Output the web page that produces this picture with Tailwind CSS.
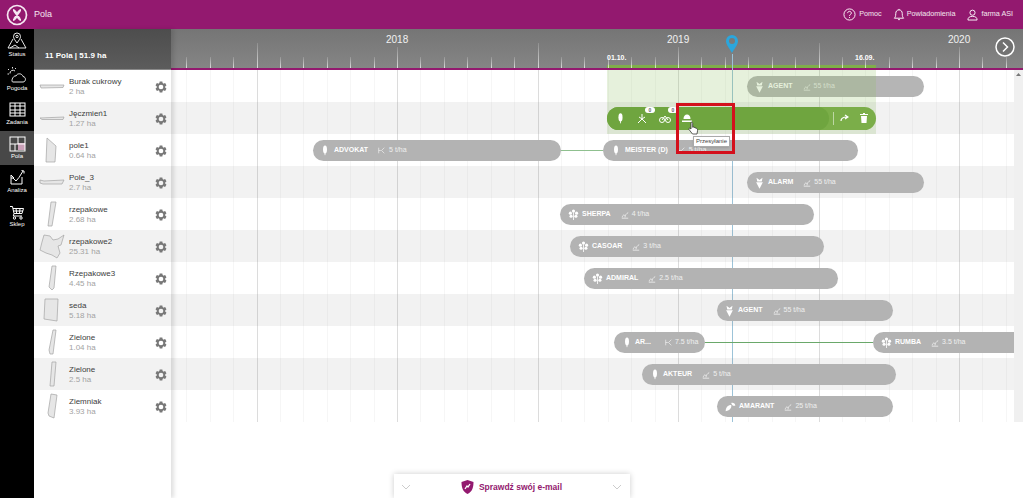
<!DOCTYPE html>
<html lang="pl">
  <head>
    <meta charset="UTF-8" />
    <title>Pola</title>
    <script src="https://cdn.jsdelivr.net/npm/@tailwindcss/browser@4"></script>
  </head>

  <body class="bg-white font-['Liberation_Sans',Arial,sans-serif] overflow-hidden">
    <!-- shared icons -->
    <svg class="hidden">
      <symbol id="gear" viewBox="0 0 24 24"><path fill-rule="evenodd" d="M19.14 12.94c.04-.3.06-.61.06-.94 0-.32-.02-.64-.07-.94l2.03-1.58c.18-.14.23-.41.12-.61l-1.92-3.32c-.12-.22-.37-.29-.59-.22l-2.39.96c-.5-.38-1.03-.7-1.62-.94l-.36-2.54c-.04-.24-.24-.41-.48-.41h-3.84c-.24 0-.43.17-.47.41l-.36 2.54c-.59.24-1.13.57-1.62.94l-2.39-.96c-.22-.08-.47 0-.59.22L2.74 8.87c-.12.21-.08.47.12.61l2.03 1.58c-.05.3-.09.63-.09.94s.02.64.07.94l-2.03 1.58c-.18.14-.23.41-.12.61l1.92 3.32c.12.22.37.29.59.22l2.39-.96c.5.38 1.03.7 1.62.94l.36 2.54c.05.24.24.41.48.41h3.84c.24 0 .44-.17.47-.41l.36-2.54c.59-.24 1.13-.56 1.62-.94l2.39.96c.22.08.47 0 .59-.22l1.92-3.32c.12-.22.07-.47-.12-.61l-2.01-1.58zM12 16a4 4 0 1 1 0-8 4 4 0 0 1 0 8z"/></symbol>
      <symbol id="grain" viewBox="0 0 12 16"><ellipse cx="6" cy="6.500" rx="3" ry="6" fill="currentColor"/><path d="M6 2v13" stroke="currentColor" stroke-width="1.200"/></symbol>
      <symbol id="beet" viewBox="0 0 14 16"><path fill="currentColor" d="M3 1l4 3 4-3-1 5H4zM2.500 7h9L7 15.500z"/></symbol>
      <symbol id="flower" viewBox="0 0 16 16"><g fill="currentColor"><circle cx="8" cy="3" r="2.300"/><circle cx="3.500" cy="6" r="2.300"/><circle cx="12.500" cy="6" r="2.300"/><circle cx="4.500" cy="10.500" r="2.300"/><circle cx="11.500" cy="10.500" r="2.300"/></g><path d="M8 5v11" stroke="currentColor" stroke-width="1.200"/></symbol>
      <symbol id="pea" viewBox="0 0 16 14"><path fill="currentColor" d="M1 13c0-5 3-9 8-9 1 3-1 8-8 9zM9 1c3-1 6 1 6 4-2 1-5 0-6-4z"/></symbol>
      <symbol id="yield" viewBox="0 0 10 10"><path fill="none" stroke="currentColor" stroke-width="1" d="M1 9h8M1.500 8C2 5 4 4 5 6M5 8c0-3 2-5 4-6"/></symbol>
      <symbol id="seed" viewBox="0 0 10 10"><path fill="none" stroke="currentColor" stroke-width="1" d="M1 1v8M1 5h3M9 1L5 5l4 4"/></symbol>
    </svg>

    <div class="relative w-[1023px] h-[498px] overflow-hidden">
      <!-- ========== Header ========== -->
      <header class="h-[29px] bg-[#93196f] flex items-center text-white/90 text-[7.2px]">
        <svg class="w-[22px] h-[22px] ml-[6px]" viewBox="0 0 22 22">
          <circle cx="11" cy="11" r="9.500" fill="none" stroke="#f5e6f1" stroke-width="1.700" />
          <path d="M7 6c2 0 2.500 3 4 3s2-3 4-3M7 16c2 0 2.500-3 4-3s2 3 4 3M8 7l6 8M14 7l-6 8" fill="none" stroke="#f5e6f1" stroke-width="2" />
        </svg>
        <span class="ml-[6px] text-[9px]">Pola</span>
        <div class="ml-auto flex items-center">
          <svg class="w-[13px] h-[13px]" viewBox="0 0 14 14" fill="none" stroke="white" stroke-width="1">
            <circle cx="7" cy="7" r="6" />
            <path d="M5 5.500C5 3 9 3 9 5.500 9 7 7 7 7 8.500M7 9.800v1" />
          </svg>
          <span class="ml-[3px]">Pomoc</span>
          <svg class="w-[12px] h-[13px] ml-[11px]" viewBox="0 0 12 14" fill="none" stroke="white" stroke-width="1">
            <path d="M1 11h10c-1-1-1.500-2-1.500-5C9.500 3.500 8 2 6 2S2.500 3.500 2.500 6c0 3-.5 4-1.500 5zM5 12.500h2M6 1v1" />
          </svg>
          <span class="ml-[2px]">Powiadomienia</span>
          <svg class="w-[11px] h-[12px] ml-[12px]" viewBox="0 0 12 13" fill="none" stroke="white" stroke-width="1">
            <circle cx="6" cy="4" r="2.800" />
            <path d="M1 12h10c0-3-2-4-5-4s-5 1-5 4z" />
          </svg>
          <span class="ml-[3px] mr-[10px]">farma ASI</span>
        </div>
      </header>

      <div class="flex h-[469px]">
        <!-- ========== Main nav ========== -->
        <nav class="w-[34px] bg-black text-white text-[6px] leading-[7px] flex flex-col shrink-0">
          <a class="h-[34px] flex flex-col items-center justify-end pb-[5px] gap-[1px]">
            <svg class="w-[20px] h-[18px]" viewBox="0 0 20 18" fill="none" stroke="white" stroke-width=".9">
              <path d="M10 11C8 8 6.500 6.500 6.500 4.500a3.500 3.500 0 0 1 7 0C13.500 6.500 12 8 10 11zM6 7l-5 9h18l-5-9M3 16l5-3 4 3" />
              <circle cx="10" cy="4.500" r="1.200" />
            </svg>
            <span>Status</span>
          </a>
          <a class="h-[34px] flex flex-col items-center justify-end pb-[5px] gap-[1px]">
            <svg class="w-[20px] h-[18px]" viewBox="0 0 20 18" fill="none" stroke="white" stroke-width=".9">
              <path d="M6 16h10c3 0 3.500-5 0-5.500C15 7 10 7 9 10c-3-1-5.500 6-3 6z" />
              <path d="M3 7.500a3 3 0 0 1 5-2.500M5.500 1v1.500M1 3l1 1M.5 8H2M9 2L8 3" />
            </svg>
            <span>Pogoda</span>
          </a>
          <a class="h-[34px] flex flex-col items-center justify-end pb-[5px] gap-[1px]">
            <svg class="w-[17px] h-[17px]" viewBox="0 0 17 17" fill="none" stroke="white" stroke-width="1">
              <rect x="1" y="2" width="15" height="13" />
              <path d="M1 5h15M1 9h15M1 12h15M6 2v13M11 2v13" />
            </svg>
            <span>Zadania</span>
          </a>
          <a class="h-[34px] flex flex-col items-center justify-end pb-[5px] gap-[1px] bg-[#484848]">
            <svg class="w-[17px] h-[17px]" viewBox="0 0 17 17" fill="none" stroke="white" stroke-width="1">
              <rect x="9" y="8" width="7" height="7" fill="#c9a0b8" stroke="none" />
              <rect x="1" y="2" width="15" height="14" />
              <path d="M9 2v7H1M9 9h7M6 9v7" />
            </svg>
            <span>Pola</span>
          </a>
          <a class="h-[34px] flex flex-col items-center justify-end pb-[5px] gap-[1px]">
            <svg class="w-[17px] h-[17px]" viewBox="0 0 17 17" fill="none" stroke="white" stroke-width="1">
              <path d="M2 6v9h11V8M2 9h2l3 3 3-3.500 4-6.500M2 6l3 3M12.500 1.500l2.500.5 0 2.500" />
            </svg>
            <span>Analiza</span>
          </a>
          <a class="h-[34px] flex flex-col items-center justify-end pb-[5px] gap-[1px]">
            <svg class="w-[16px] h-[15px]" viewBox="0 0 16 15" fill="none" stroke="white" stroke-width="1">
              <path d="M1 1.500h2.500l1.500 7h8l1.500-5H4M5 8.500L4.300 11H13M7 3.500l.7 5M11 3.500l-.5 5M4.500 6h9.500" />
              <circle cx="5.500" cy="13" r="1.200" />
              <circle cx="12" cy="13" r="1.200" />
            </svg>
            <span>Sklep</span>
          </a>
        </nav>

        <!-- ========== Field list ========== -->
        <aside class="w-[137px] shrink-0 relative z-20 bg-white shadow-[3px_0_4px_rgba(0,0,0,0.12)]">
          <div class="h-[41px] bg-gradient-to-b from-[#4d4d4d] to-[#5c5c5c] border-b border-[#8a8a8a] flex items-end pl-[11px] pb-[7px] text-[8px] font-bold text-white">
            11 Pola | 51.9 ha
          </div>

          <div class="h-[32px] flex items-center text-[8px]">
            <svg class="w-[26px] h-[26px] ml-[5px] shrink-0" viewBox="0 0 26 26"><path d="M1 12h24l-1 2.500L2 15z" fill="#e6e6e6" stroke="#a3a3a3" stroke-width=".7" /></svg>
            <div class="ml-[4px] pt-[2px] leading-[10px]"><p class="text-[#3d3d3d]">Burak cukrowy</p><p class="text-[#a3a3a3]">2 ha</p></div>
            <svg class="w-[14px] h-[14px] mt-[2px] ml-auto mr-[3px] fill-[#787878]"><use href="#gear" /></svg>
          </div>
          <div class="h-[32px] flex items-center text-[8px] bg-[#f2f2f2]">
            <svg class="w-[26px] h-[26px] ml-[5px] shrink-0" viewBox="0 0 26 26"><path d="M1 13l24-1-1 2.500H3z" fill="#e6e6e6" stroke="#a3a3a3" stroke-width=".7" /></svg>
            <div class="ml-[4px] pt-[2px] leading-[10px]"><p class="text-[#3d3d3d]">Jęczmień1</p><p class="text-[#a3a3a3]">1.27 ha</p></div>
            <svg class="w-[14px] h-[14px] mt-[2px] ml-auto mr-[3px] fill-[#787878]"><use href="#gear" /></svg>
          </div>
          <div class="h-[32px] flex items-center text-[8px]">
            <svg class="w-[26px] h-[26px] ml-[5px] shrink-0" viewBox="0 0 26 26"><path d="M8 1l9 8-1 16H7z" fill="#e6e6e6" stroke="#a3a3a3" stroke-width=".7" /></svg>
            <div class="ml-[4px] pt-[2px] leading-[10px]"><p class="text-[#3d3d3d]">pole1</p><p class="text-[#a3a3a3]">0.64 ha</p></div>
            <svg class="w-[14px] h-[14px] mt-[2px] ml-auto mr-[3px] fill-[#787878]"><use href="#gear" /></svg>
          </div>
          <div class="h-[32px] flex items-center text-[8px] bg-[#f2f2f2]">
            <svg class="w-[26px] h-[26px] ml-[5px] shrink-0" viewBox="0 0 26 26"><path d="M1 11l4 1 20-1-2 4H4l-3-1z" fill="#e6e6e6" stroke="#a3a3a3" stroke-width=".7" /></svg>
            <div class="ml-[4px] pt-[2px] leading-[10px]"><p class="text-[#3d3d3d]">Pole_3</p><p class="text-[#a3a3a3]">2.7 ha</p></div>
            <svg class="w-[14px] h-[14px] mt-[2px] ml-auto mr-[3px] fill-[#787878]"><use href="#gear" /></svg>
          </div>
          <div class="h-[32px] flex items-center text-[8px]">
            <svg class="w-[26px] h-[26px] ml-[5px] shrink-0" viewBox="0 0 26 26"><path d="M12 1h5l-4 24H9z" fill="#e6e6e6" stroke="#a3a3a3" stroke-width=".7" /></svg>
            <div class="ml-[4px] pt-[2px] leading-[10px]"><p class="text-[#3d3d3d]">rzepakowe</p><p class="text-[#a3a3a3]">2.68 ha</p></div>
            <svg class="w-[14px] h-[14px] mt-[2px] ml-auto mr-[3px] fill-[#787878]"><use href="#gear" /></svg>
          </div>
          <div class="h-[32px] flex items-center text-[8px] bg-[#f2f2f2]">
            <svg class="w-[26px] h-[26px] ml-[5px] shrink-0" viewBox="0 0 26 26"><path d="M5 2l6 1 3 4 5-1 6-4-3 10-3 1 2 7-3 5-5-3-6-2-6-3 2-8z" fill="#e6e6e6" stroke="#a3a3a3" stroke-width=".7" /></svg>
            <div class="ml-[4px] pt-[2px] leading-[10px]"><p class="text-[#3d3d3d]">rzepakowe2</p><p class="text-[#a3a3a3]">25.31 ha</p></div>
            <svg class="w-[14px] h-[14px] mt-[2px] ml-auto mr-[3px] fill-[#787878]"><use href="#gear" /></svg>
          </div>
          <div class="h-[32px] flex items-center text-[8px]">
            <svg class="w-[26px] h-[26px] ml-[5px] shrink-0" viewBox="0 0 26 26"><path d="M13 1h4l-2 22-2 2-3-3z" fill="#e6e6e6" stroke="#a3a3a3" stroke-width=".7" /></svg>
            <div class="ml-[4px] pt-[2px] leading-[10px]"><p class="text-[#3d3d3d]">Rzepakowe3</p><p class="text-[#a3a3a3]">4.45 ha</p></div>
            <svg class="w-[14px] h-[14px] mt-[2px] ml-auto mr-[3px] fill-[#787878]"><use href="#gear" /></svg>
          </div>
          <div class="h-[32px] flex items-center text-[8px] bg-[#f2f2f2]">
            <svg class="w-[26px] h-[26px] ml-[5px] shrink-0" viewBox="0 0 26 26"><path d="M6 2h13l-1 22-13-2z" fill="#e6e6e6" stroke="#a3a3a3" stroke-width=".7" /></svg>
            <div class="ml-[4px] pt-[2px] leading-[10px]"><p class="text-[#3d3d3d]">seda</p><p class="text-[#a3a3a3]">5.18 ha</p></div>
            <svg class="w-[14px] h-[14px] mt-[2px] ml-auto mr-[3px] fill-[#787878]"><use href="#gear" /></svg>
          </div>
          <div class="h-[32px] flex items-center text-[8px]">
            <svg class="w-[26px] h-[26px] ml-[5px] shrink-0" viewBox="0 0 26 26"><path d="M14 1h3l-3 24h-3l-1-4z" fill="#e6e6e6" stroke="#a3a3a3" stroke-width=".7" /></svg>
            <div class="ml-[4px] pt-[2px] leading-[10px]"><p class="text-[#3d3d3d]">Zielone</p><p class="text-[#a3a3a3]">1.04 ha</p></div>
            <svg class="w-[14px] h-[14px] mt-[2px] ml-auto mr-[3px] fill-[#787878]"><use href="#gear" /></svg>
          </div>
          <div class="h-[32px] flex items-center text-[8px] bg-[#f2f2f2]">
            <svg class="w-[26px] h-[26px] ml-[5px] shrink-0" viewBox="0 0 26 26"><path d="M13 1h4l-2 24h-4z" fill="#e6e6e6" stroke="#a3a3a3" stroke-width=".7" /></svg>
            <div class="ml-[4px] pt-[2px] leading-[10px]"><p class="text-[#3d3d3d]">Zielone</p><p class="text-[#a3a3a3]">2.5 ha</p></div>
            <svg class="w-[14px] h-[14px] mt-[2px] ml-auto mr-[3px] fill-[#787878]"><use href="#gear" /></svg>
          </div>
          <div class="h-[32px] flex items-center text-[8px]">
            <svg class="w-[26px] h-[26px] ml-[5px] shrink-0" viewBox="0 0 26 26"><path d="M12 1l6 1-3 23-5-2-1-3z" fill="#e6e6e6" stroke="#a3a3a3" stroke-width=".7" /></svg>
            <div class="ml-[4px] pt-[2px] leading-[10px]"><p class="text-[#3d3d3d]">Ziemniak</p><p class="text-[#a3a3a3]">3.93 ha</p></div>
            <svg class="w-[14px] h-[14px] mt-[2px] ml-auto mr-[3px] fill-[#787878]"><use href="#gear" /></svg>
          </div>
        </aside>

        <!-- ========== Timeline ========== -->
        <main class="relative flex-1 min-w-0">
          <div id="axis" class="relative h-[41px] bg-gradient-to-b from-[#757575] to-[#858585] border-b-2 border-[#93196f]">
            <span class="absolute left-[215px] top-[3px] text-[10px] text-white/90">2018</span>
            <span class="absolute left-[496px] top-[3px] text-[10px] text-white/90">2019</span>
            <span class="absolute left-[777px] top-[3px] text-[10px] text-white/90">2020</span>
            <span class="absolute left-[436px] top-[24px] text-[7px] font-bold text-white">01.10.</span>
            <span class="absolute left-[684px] top-[24px] text-[7px] font-bold text-white">16.09.</span>
            <div class="absolute left-[436px] w-[269px] bottom-0 h-[3px] bg-[#7fae4a]"></div>
            <svg class="absolute left-[555px] top-[6px] w-[12px] h-[18px] z-10" viewBox="0 0 12 18">
              <path fill-rule="evenodd" fill="#2ba6dc" d="M6 18C4 14 0 10 0 6a6 6 0 0 1 12 0c0 4-4 8-6 12zM6 9a3 3 0 1 0 0-6 3 3 0 0 0 0 6z" />
            </svg>
            <svg class="absolute left-[824px] top-[8px] w-[20px] h-[20px] z-10" viewBox="0 0 20 20" fill="none" stroke="white" stroke-width="1.500">
              <circle cx="10" cy="10" r="9" fill="#6b6b6b" fill-opacity=".6" />
              <path d="M8 5.500l4.500 4.500L8 14.500" />
            </svg>
          </div>

          <div class="relative w-[843px]">
            <!-- grid lines drawn by script below -->
            <div id="grid" class="absolute inset-0"></div>
            <div class="absolute left-[561px] -top-[16px] bottom-0 w-px bg-[#9cc3d8]"></div>

            <div class="relative h-[32px]">
              <div class="absolute left-[576px] w-[177px] top-[6px] h-[21px] rounded-full bg-[#b5b5b5] flex items-center text-[7px] text-white">
                <svg class="w-[11px] h-[12px] ml-[7px]"><use href="#beet" /></svg>
                <b class="ml-[3px]">AGENT</b>
                <svg class="w-[8px] h-[8px] ml-[10px] text-white/70"><use href="#yield" /></svg>
                <span class="ml-[3px] text-white/70">55 t/ha</span>
              </div>
            </div>

            <!-- selected season, lies over the first row's bar -->
            <div class="absolute left-[436px] w-[269px] top-0 h-[64px] bg-[#8fbf5f]/22"></div>

            <div class="relative h-[32px] bg-[#808080]/10">
              <div class="absolute left-[436px] w-[269px] top-[5px] h-[23px] rounded-full bg-[#7bae49] text-white">
                <div class="absolute left-0 top-0 bottom-0 w-[222px] rounded-full bg-[#6fa53f]"></div>
                <svg class="absolute left-[9px] top-[6px] w-[9px] h-[11px]"><use href="#grain" /></svg>
                <svg class="absolute left-[30px] top-[6px] w-[10px] h-[11px]" viewBox="0 0 10 11" fill="none" stroke="white" stroke-width="1"><path d="M5 1v5L1 10M5 6l4 4M2 4l3 2 3-2" /></svg>
                <span class="absolute left-[38px] top-[0px] w-[10px] h-[6px] rounded-[3px] bg-white text-[#666] text-[5px] leading-[6px] font-bold text-center">0</span>
                <svg class="absolute left-[52px] top-[7px] w-[12px] h-[9px]" viewBox="0 0 12 9" fill="none" stroke="white" stroke-width="1"><circle cx="3" cy="6" r="2.500" /><circle cx="9" cy="6" r="2.500" /><path d="M3 6l3-4 3 4" /></svg>
                <span class="absolute left-[61px] top-[0px] w-[10px] h-[6px] rounded-[3px] bg-white text-[#666] text-[5px] leading-[6px] font-bold text-center">0</span>
                <svg class="absolute left-[75px] top-[6px] w-[10px] h-[10px]" viewBox="0 0 10 10" fill="white"><path d="M1.500 6C1.500 3 3 1.500 5 1.500S8.500 3 8.500 6zM0 7.500h10V9H0z" /></svg>
                <div class="absolute left-[226px] top-[5px] h-[13px] w-px bg-white/50"></div>
                <svg class="absolute left-[233px] top-[7px] w-[9px] h-[8px]" viewBox="0 0 9 8" fill="none" stroke="white" stroke-width="1.200"><path d="M1 7c0-3 2-4 6-4M5 1l3 2-3 2" /></svg>
                <svg class="absolute left-[253px] top-[6px] w-[8px] h-[10px]" viewBox="0 0 8 10" fill="white"><path d="M0 1h8v1H0zM3 0h2v1H3zM1 3h6l-.5 7h-5z" /></svg>
              </div>
            </div>

            <div class="relative h-[32px]">
              <div class="absolute left-[390px] w-[42px] top-[16px] h-px bg-[#8fc08f]"></div>
              <div class="absolute left-[142px] w-[248px] top-[6px] h-[21px] rounded-full bg-[#b3b3b3] flex items-center text-[7px] text-white">
                <svg class="w-[8px] h-[11px] ml-[8px]"><use href="#grain" /></svg>
                <b class="ml-[5px]">ADVOKAT</b>
                <svg class="w-[7px] h-[7px] ml-[10px] text-white/80"><use href="#seed" /></svg>
                <span class="ml-[4px] text-white/80">5 t/ha</span>
              </div>
              <div class="absolute left-[432px] w-[255px] top-[6px] h-[21px] rounded-full bg-[#b3b3b3] flex items-center text-[7px] text-white">
                <svg class="w-[8px] h-[11px] ml-[9px]"><use href="#grain" /></svg>
                <b class="ml-[5px]">MEISTER (D)</b>
                <svg class="w-[7px] h-[7px] ml-[10px] text-white/80"><use href="#seed" /></svg>
                <span class="ml-[4px] text-white/80">5 t/ha</span>
              </div>
            </div>

            <div class="relative h-[32px] bg-[#808080]/10">
              <div class="absolute left-[576px] w-[177px] top-[6px] h-[21px] rounded-full bg-[#b3b3b3] flex items-center text-[7px] text-white">
                <svg class="w-[11px] h-[12px] ml-[7px]"><use href="#beet" /></svg>
                <b class="ml-[3px]">ALARM</b>
                <svg class="w-[8px] h-[8px] ml-[10px] text-white/80"><use href="#yield" /></svg>
                <span class="ml-[3px] text-white/80">55 t/ha</span>
              </div>
            </div>

            <div class="relative h-[32px]">
              <div class="absolute left-[389px] w-[254px] top-[6px] h-[21px] rounded-full bg-[#b3b3b3] flex items-center text-[7px] text-white">
                <svg class="w-[11px] h-[11px] ml-[8px]"><use href="#flower" /></svg>
                <b class="ml-[3px]">SHERPA</b>
                <svg class="w-[8px] h-[8px] ml-[10px] text-white/80"><use href="#yield" /></svg>
                <span class="ml-[3px] text-white/80">4 t/ha</span>
              </div>
            </div>

            <div class="relative h-[32px] bg-[#808080]/10">
              <div class="absolute left-[399px] w-[254px] top-[6px] h-[21px] rounded-full bg-[#b3b3b3] flex items-center text-[7px] text-white">
                <svg class="w-[11px] h-[11px] ml-[8px]"><use href="#flower" /></svg>
                <b class="ml-[3px]">CASOAR</b>
                <svg class="w-[8px] h-[8px] ml-[10px] text-white/80"><use href="#yield" /></svg>
                <span class="ml-[3px] text-white/80">3 t/ha</span>
              </div>
            </div>

            <div class="relative h-[32px]">
              <div class="absolute left-[413px] w-[254px] top-[6px] h-[21px] rounded-full bg-[#b3b3b3] flex items-center text-[7px] text-white">
                <svg class="w-[11px] h-[11px] ml-[8px]"><use href="#flower" /></svg>
                <b class="ml-[3px]">ADMIRAL</b>
                <svg class="w-[8px] h-[8px] ml-[10px] text-white/80"><use href="#yield" /></svg>
                <span class="ml-[3px] text-white/80">2.5 t/ha</span>
              </div>
            </div>

            <div class="relative h-[32px] bg-[#808080]/10">
              <div class="absolute left-[546px] w-[176px] top-[6px] h-[21px] rounded-full bg-[#b3b3b3] flex items-center text-[7px] text-white">
                <svg class="w-[11px] h-[12px] ml-[7px]"><use href="#beet" /></svg>
                <b class="ml-[3px]">AGENT</b>
                <svg class="w-[8px] h-[8px] ml-[10px] text-white/80"><use href="#yield" /></svg>
                <span class="ml-[3px] text-white/80">55 t/ha</span>
              </div>
            </div>

            <div class="relative h-[32px]">
              <div class="absolute left-[534px] w-[168px] top-[16px] h-px bg-[#6aa86a]"></div>
              <div class="absolute left-[443px] w-[91px] top-[6px] h-[21px] rounded-full bg-[#b3b3b3] flex items-center text-[7px] text-white">
                <svg class="w-[8px] h-[11px] ml-[9px]"><use href="#grain" /></svg>
                <b class="ml-[4px]">AR...</b>
                <svg class="w-[7px] h-[7px] ml-[14px] text-white/80"><use href="#seed" /></svg>
                <span class="ml-[3px] text-white/80">7.5 t/ha</span>
              </div>
              <div class="absolute left-[702px] w-[141px] top-[6px] h-[21px] rounded-l-full bg-[#b3b3b3] flex items-center text-[7px] text-white">
                <svg class="w-[11px] h-[11px] ml-[8px]"><use href="#flower" /></svg>
                <b class="ml-[3px]">RUMBA</b>
                <svg class="w-[8px] h-[8px] ml-[10px] text-white/80"><use href="#yield" /></svg>
                <span class="ml-[3px] text-white/80">3.5 t/ha</span>
              </div>
            </div>

            <div class="relative h-[32px] bg-[#808080]/10">
              <div class="absolute left-[471px] w-[254px] top-[6px] h-[21px] rounded-full bg-[#b3b3b3] flex items-center text-[7px] text-white">
                <svg class="w-[8px] h-[11px] ml-[9px]"><use href="#grain" /></svg>
                <b class="ml-[4px]">AKTEUR</b>
                <svg class="w-[8px] h-[8px] ml-[10px] text-white/80"><use href="#yield" /></svg>
                <span class="ml-[3px] text-white/80">5 t/ha</span>
              </div>
            </div>

            <div class="relative h-[32px]">
              <div class="absolute left-[546px] w-[176px] top-[6px] h-[21px] rounded-full bg-[#b3b3b3] flex items-center text-[7px] text-white">
                <svg class="w-[11px] h-[10px] ml-[8px]"><use href="#pea" /></svg>
                <b class="ml-[3px]">AMARANT</b>
                <svg class="w-[8px] h-[8px] ml-[10px] text-white/80"><use href="#yield" /></svg>
                <span class="ml-[3px] text-white/80">25 t/ha</span>
              </div>
            </div>

            <!-- scroll track -->
            <div class="absolute left-[843px] w-[9px] top-0 bottom-0 bg-[#f0f0f0] flex justify-center pt-[3px]">
              <svg class="w-[5px] h-[3px]" viewBox="0 0 5 3"><path d="M2.500 0L5 3H0z" fill="#777" /></svg>
            </div>
          </div>
        </main>
      </div>

      <!-- ========== Overlays ========== -->
      <div class="absolute left-[676px] top-[103px] w-[59px] h-[51px] border-[3px] border-[#d4101c] z-30"></div>
      <div class="absolute left-[693px] top-[136px] h-[11px] px-[2px] bg-white border border-[#aaa] shadow-sm text-[6px] leading-[9px] text-[#444] z-40">Przesyłanie</div>
      <svg class="absolute left-[688px] top-[121px] w-[11px] h-[14px] z-50" viewBox="0 0 11 14">
        <path fill="white" stroke="#333" stroke-width=".8" d="M3 1.500c.8-.8 1.700 0 1.700.8v4l1-.3 3 1.500c1 .6 1 1.500.8 2.500L9 13H4.500L1 8.500c-.5-1 .5-1.700 1.300-1L3 8z" />
      </svg>

      <div class="absolute left-[394px] top-[474px] w-[236px] h-[24px] bg-white shadow-[0_0_6px_rgba(0,0,0,0.2)] flex items-center justify-between pl-[7px] pr-[8px] pt-[2px] z-30">
        <svg class="w-[10px] h-[6px]" viewBox="0 0 10 6" fill="none" stroke="#ccc" stroke-width="1"><path d="M1 1l4 4 4-4" /></svg>
        <div class="flex items-center text-[8.500px] font-bold text-[#93196f]">
          <svg class="w-[13px] h-[14px] mr-[5px]" viewBox="0 0 13 14">
            <path fill="#93196f" d="M6.500 0l6 2c0 5-1 9.500-6 12-5-2.500-6-7-6-12z" />
            <path fill="none" stroke="white" stroke-width="1.300" d="M4 9l2-3 1 1 2-3" />
          </svg>
          Sprawdź swój e-mail
        </div>
        <svg class="w-[10px] h-[6px]" viewBox="0 0 10 6" fill="none" stroke="#ccc" stroke-width="1"><path d="M1 1l4 4 4-4" /></svg>
      </div>
    </div>

    <script>
      // month ticks: one year is 281px, first major line at x=397 (226 in the timeline)
      const axis = document.getElementById("axis");
      const grid = document.getElementById("grid");
      for (let i = -9; i < 30; i++) {
        const x = 226 + (i * 281) / 12;
        if (x < 0) continue;
        const m = ((i % 12) + 12) % 12;
        const tick = document.createElement("div");
        tick.className = "absolute bottom-0 w-px bg-gradient-to-t from-white/70 to-white/15";
        tick.style.left = x + "px";
        tick.style.height = m === 0 ? "21px" : m === 6 ? "25px" : "11px";
        axis.appendChild(tick);

        const line = document.createElement("div");
        line.className = "absolute top-0 w-px";
        line.style.left = x + "px";
        line.style.height = "352px";
        line.style.background = m === 0 || m === 6 ? "#dcdcdc" : "#f6f6f6";
        grid.appendChild(line);
      }
    </script>
  </body>
</html>
